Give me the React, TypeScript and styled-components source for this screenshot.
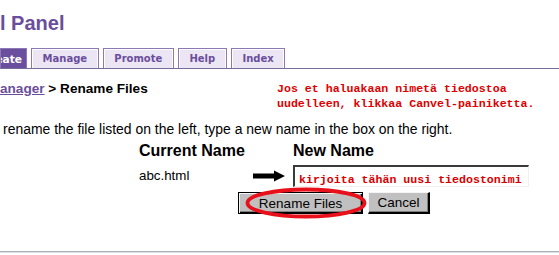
import React from "react";
import styled, { createGlobalStyle } from "styled-components";

const Global = createGlobalStyle`
  html, body { margin: 0; padding: 0; background: #fff; }
  body { font-family: "Liberation Sans", Arial, sans-serif; color: #000; overflow: hidden; }
`;

const Page = styled.div`
  width: 559px;
  height: 255px;
  overflow: hidden;
  display: flex;
  flex-direction: column;
`;

const Title = styled.h1`
  margin: 11px 0 0 0;
  font-size: 20px;
  line-height: 24px;
  font-weight: bold;
  color: #6a4e9c;
  white-space: nowrap;
`;

const TabBar = styled.nav`
  margin-top: 13px;
  height: 20px;
  display: flex;
  gap: 4px;
  border-bottom: 1px solid #7a6c98;
`;

const Tab = styled.a<{ $active?: boolean }>`
  display: flex;
  align-items: center;
  justify-content: ${(p) => (p.$active ? "flex-end" : "center")};
  box-sizing: border-box;
  width: ${(p) => (p.$active ? "27px" : "auto")};
  padding: ${(p) => (p.$active ? "0 4px 0 0" : "0 10.6px")};
  overflow: hidden;
  font-family: "DejaVu Sans", Verdana, sans-serif;
  font-weight: bold;
  font-size: ${(p) => (p.$active ? "10.6px" : "10px")};
  text-decoration: none;
  white-space: nowrap;
  color: ${(p) => (p.$active ? "#fff" : "#6a4e9c")};
  background: ${(p) => (p.$active ? "#6b4f9e" : "#ece6f4")};
  border: 1px solid #8c78b4;
  border-bottom: none;
  box-shadow: ${(p) =>
    p.$active ? "none" : "inset 1px 1px 0 #fff, inset -1px 0 0 #fff"};
`;

const InfoRow = styled.div`
  display: flex;
  align-items: flex-start;
  margin-top: 12px;
`;

const Crumbs = styled.div`
  width: 277px;
  font-weight: bold;
  font-size: 13.6px;
  line-height: 15px;
  white-space: nowrap;
`;

const CrumbLink = styled.a`
  color: #6a4e9c;
  text-decoration: underline;
`;

const Note = styled.p`
  margin: 0;
  font-family: "Liberation Mono", "Courier New", monospace;
  font-weight: bold;
  font-size: 11.6px;
  line-height: 15px;
  color: #e00000;
  white-space: nowrap;
`;

const Instructions = styled.p`
  margin: 10px 0 0 0;
  padding-left: 3px;
  font-size: 13.95px;
  line-height: 16px;
  white-space: nowrap;
`;

const RenameGrid = styled.div`
  display: grid;
  grid-template-columns: 114px 40px 236px;
  grid-template-rows: 18px 22px 22px;
  row-gap: 5px;
  margin: 5px 0 0 139px;
  align-items: center;
`;

const ColHead = styled.div`
  font-size: 16px;
  line-height: 18px;
  font-weight: bold;
`;

const FileName = styled.div`
  font-size: 13.33px;
  line-height: 16px;
`;

const ArrowCell = styled.div`
  display: flex;
  align-items: center;
`;

const NameInput = styled.input`
  box-sizing: border-box;
  width: 236px;
  height: 22px;
  margin: 0;
  padding: 5px 0 0 4px;
  border-style: solid;
  border-width: 2px 1px 1px 2px;
  border-color: #3a3a3a #f0f0f0 #f0f0f0 #3a3a3a;
  background: #fff;
  font-family: "Liberation Mono", "Courier New", monospace;
  font-weight: bold;
  font-size: 11.6px;
  line-height: 14px;
  color: #d80000;
  outline: none;
`;

const ButtonRow = styled.div`
  grid-column: 1 / -1;
  display: flex;
  justify-content: center;
  gap: 5px;
`;

const ButtonWrap = styled.div`
  position: relative;
  display: flex;
`;

const Button = styled.button<{ $default?: boolean; $width: number }>`
  box-sizing: border-box;
  width: ${(p) => p.$width}px;
  height: 22px;
  margin: 0;
  padding: 0;
  background: #c0c0c0;
  font-family: "Liberation Sans", Arial, sans-serif;
  font-size: 13.5px;
  color: #000;
  border-style: solid;
  ${(p) =>
    p.$default
      ? `border-width: 1px; border-color: #000; box-shadow: inset 1px 1px 0 #f4f4f4, inset -1px -1px 0 #000, inset -2px -2px 0 #808080;`
      : `border-width: 1px 2px 2px 1px; border-color: #f4f4f4 #000 #000 #f4f4f4; box-shadow: inset -1px -1px 0 #808080;`}
`;

const Ellipse = styled.svg`
  position: absolute;
  left: 7px;
  top: -5px;
  pointer-events: none;
`;

const Rule = styled.div`
  margin-top: auto;
  margin-bottom: 2px;
  height: 1px;
  background: #a9b1bb;
  border-bottom: 1px solid #dde1e6;
`;

export default function App() {
  return (
    <>
      <Global />
      <Page>
        <Title>l Panel</Title>
        <TabBar>
          <Tab $active>Create</Tab>
          <Tab>Manage</Tab>
          <Tab>Promote</Tab>
          <Tab>Help</Tab>
          <Tab>Index</Tab>
        </TabBar>
        <InfoRow>
          <Crumbs>
            <CrumbLink href="#">anager</CrumbLink> &gt; Rename Files
          </Crumbs>
          <Note>
            Jos et haluakaan nimetä tiedostoa
            <br />
            uudelleen, klikkaa Canvel-painiketta.
          </Note>
        </InfoRow>
        <Instructions>
          rename the file listed on the left, type a new name in the box on the right.
        </Instructions>
        <RenameGrid>
          <ColHead>Current Name</ColHead>
          <div />
          <ColHead>New Name</ColHead>
          <FileName>abc.html</FileName>
          <ArrowCell>
            <svg width="33" height="12" viewBox="0 0 33 12">
              <path d="M0 3.5 H21 V0.5 L32 6 L21 11.5 V8.5 H0 Z" fill="#000" />
            </svg>
          </ArrowCell>
          <NameInput defaultValue="kirjoita tähän uusi tiedostonimi" />
          <ButtonRow>
            <ButtonWrap>
              <Button $default $width={125}>Rename Files</Button>
              <Ellipse width="122" height="32" viewBox="0 0 122 32">
                <ellipse cx="61" cy="16" rx="58.5" ry="13.5" fill="none" stroke="#e8101a" strokeWidth="3.8" />
              </Ellipse>
            </ButtonWrap>
            <Button $width={62}>Cancel</Button>
          </ButtonRow>
        </RenameGrid>
        <Rule />
      </Page>
    </>
  );
}
